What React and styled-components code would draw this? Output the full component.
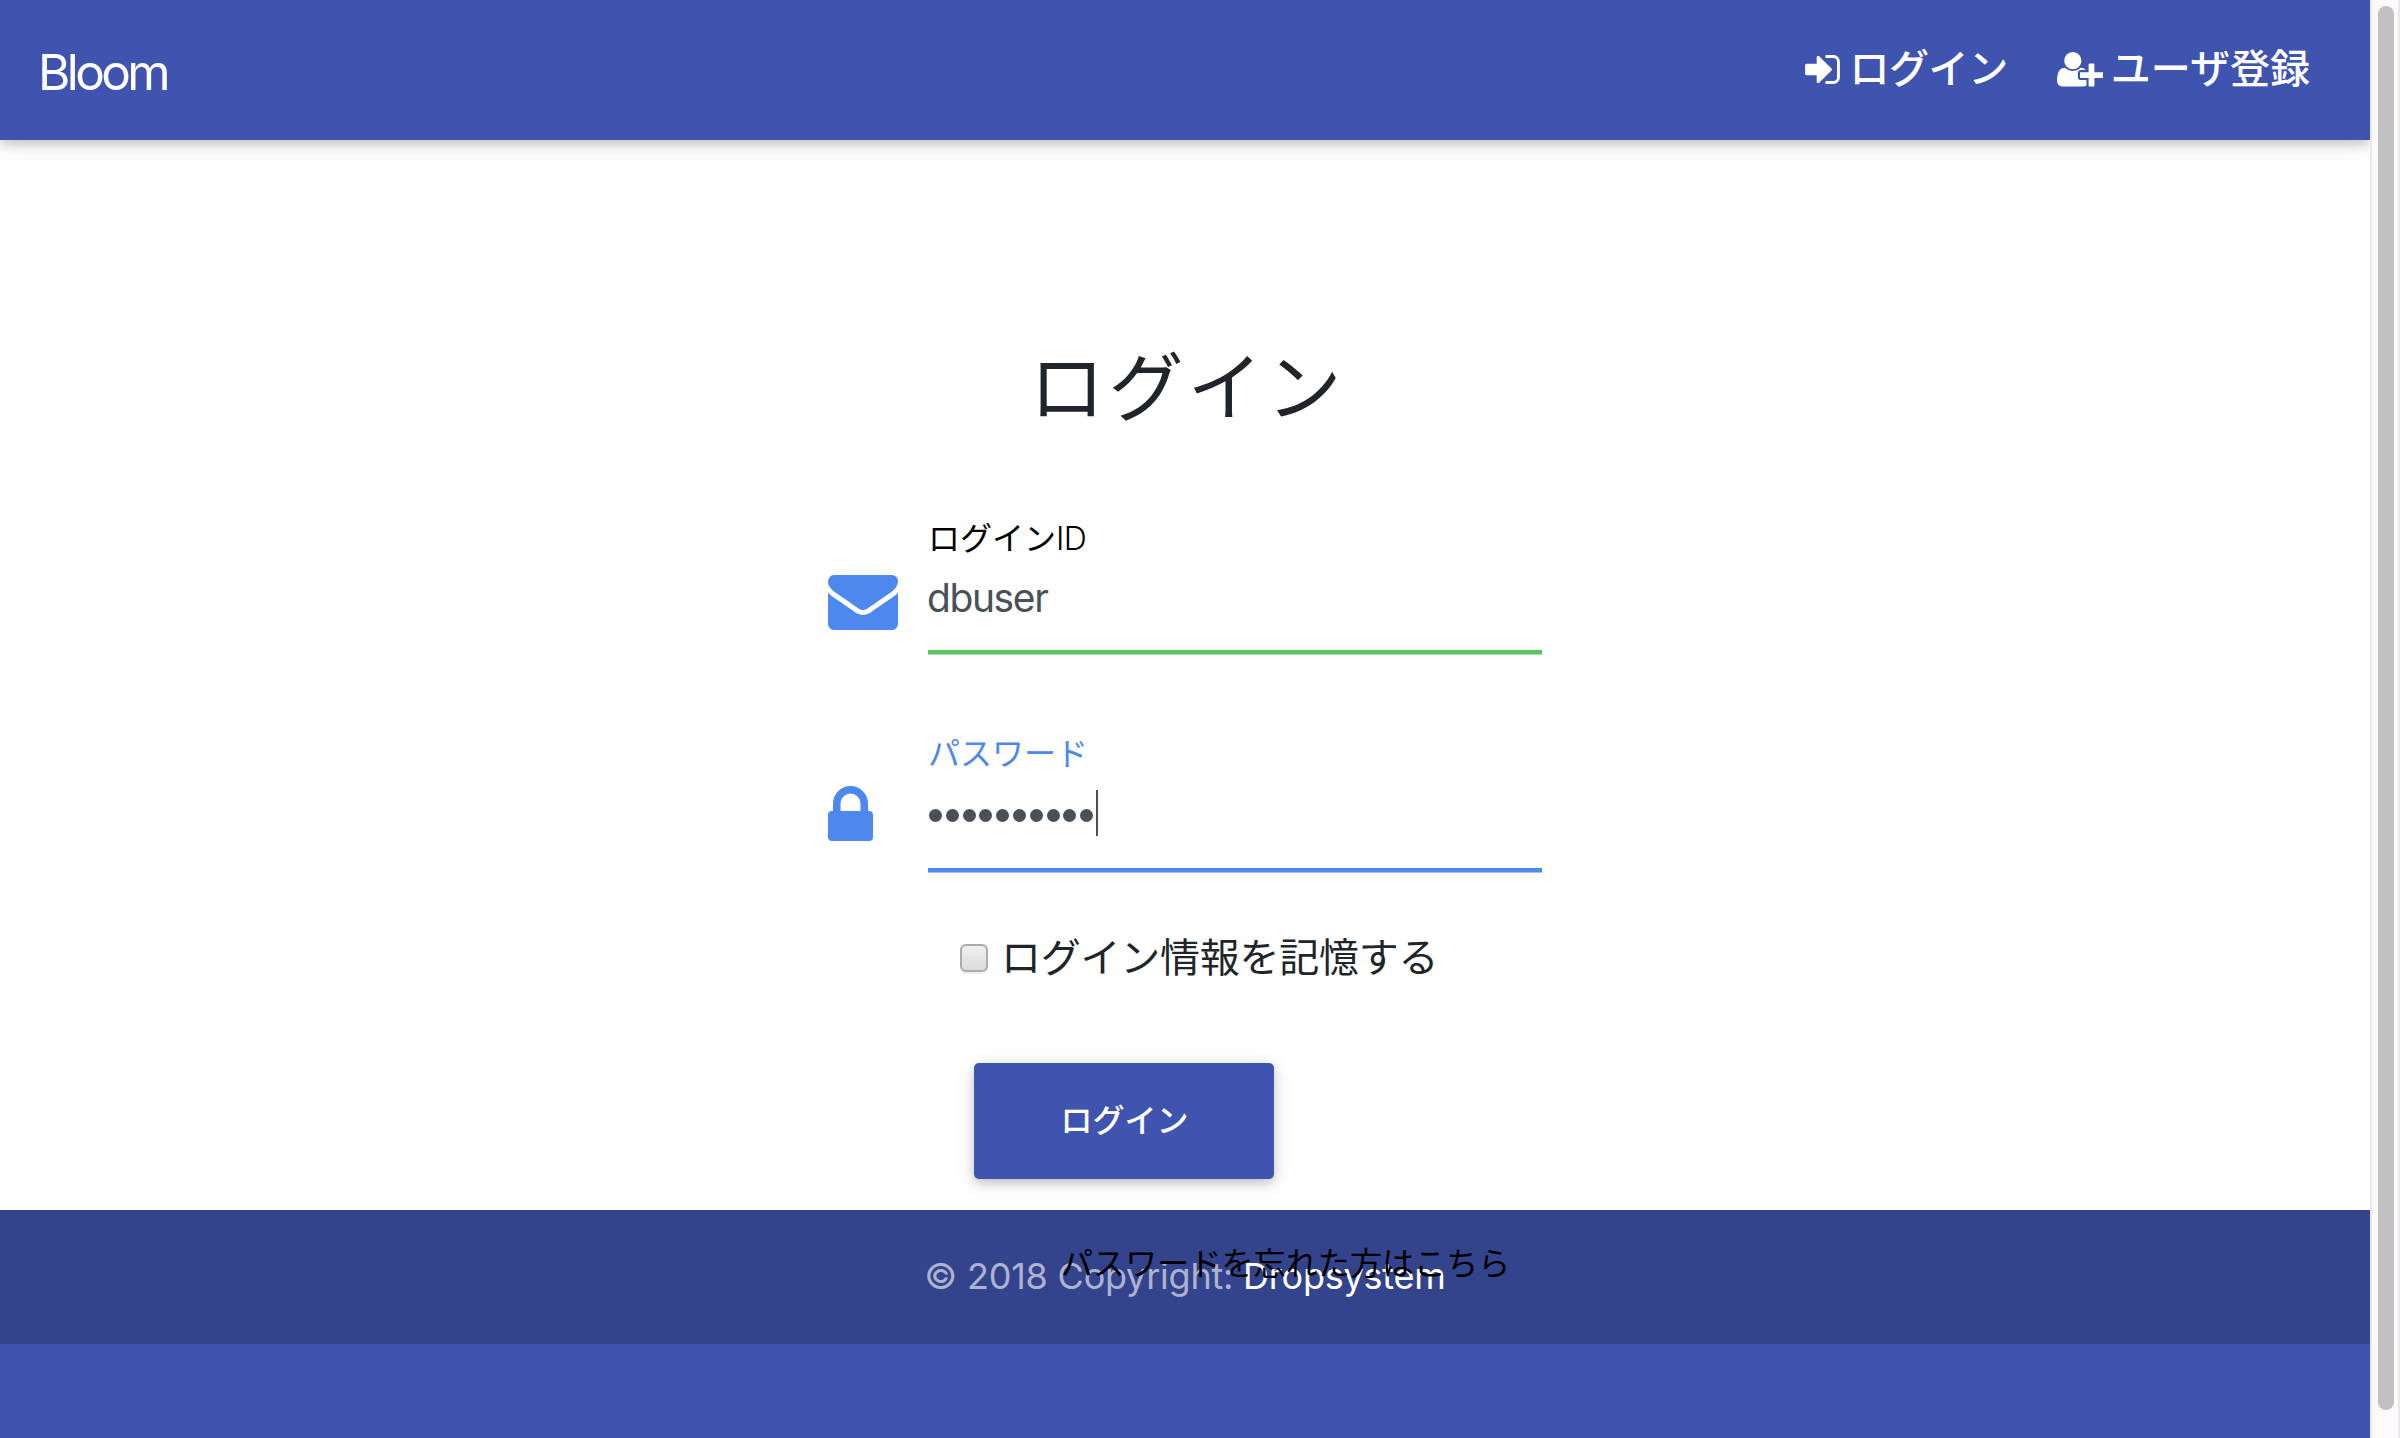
import React from "react";
import styled, { createGlobalStyle } from "styled-components";

const INDIGO = "#3f54af";
const BLUE = "#4d88ee";
const GREEN = "#5bc563";

const Global = createGlobalStyle`
  * { box-sizing: border-box; }
  html, body { margin: 0; background: #fff; overflow: hidden; }
  body {
    font-family: Inter, "Noto Sans CJK JP", sans-serif;
    font-size: 40px;
    line-height: 60px;
    color: #212529;
  }
`;

const Window = styled.div`
  display: flex;
  width: 2400px;
  height: 1438px;
`;

const Page = styled.div`
  width: 2370px;
  height: 1438px;
  display: flex;
  flex-direction: column;
`;

const Navbar = styled.header`
  display: flex;
  justify-content: space-between;
  height: 140px;
  flex: none;
  padding: 0 60px 0 38px;
  background: ${INDIGO};
  color: #fff;
  box-shadow: 0 4px 10px 0 rgba(0, 0, 0, 0.16), 0 4px 20px 0 rgba(0, 0, 0, 0.12);
`;

const Brand = styled.a`
  margin-top: 42px;
  font-size: 49.5px;
  font-weight: 400;
  letter-spacing: -3.6px;
`;

const NavLinks = styled.nav`
  display: flex;
  gap: 49px;
  padding-top: 39px;
`;

const NavLink = styled.a`
  display: flex;
  white-space: nowrap;
  font-weight: 500;
  letter-spacing: ${(p) => p.$spacing || 0}px;
`;

const NavIcon = styled.svg`
  flex: none;
  width: ${(p) => p.$w}px;
  height: ${(p) => p.$h}px;
  margin: ${(p) => p.$top}px ${(p) => p.$right}px 0 0;
  fill: currentColor;
`;

const Main = styled.main`
  height: 1070px;
  flex: none;
  display: flex;
  flex-direction: column;
  align-items: center;
`;

const Title = styled.h1`
  margin: 200px 0 0;
  padding-left: 5px;
  font-size: 75px;
  letter-spacing: 4px;
  line-height: 96px;
  font-weight: 400;
`;

const Form = styled.form`
  width: 716px;
  margin: 77px 0 0 0;
  display: flex;
  flex-direction: column;
`;

const Field = styled.div`
  display: flex;
  height: ${(p) => p.$h}px;
  color: ${(p) => p.$color};
`;

const FieldIcon = styled.svg`
  width: 70px;
  height: 70px;
  flex: none;
  margin: ${(p) => p.$top}px 30px 0 1px;
  fill: ${BLUE};
`;

const Control = styled.div`
  width: 614px;
  flex: none;
  height: ${(p) => p.$h}px;
  padding-top: ${(p) => p.$top}px;
  border-bottom: 4px solid ${(p) => p.$line};
  box-shadow: 0 1px 0 0 ${(p) => p.$line}88;
`;

const Label = styled.label`
  display: block;
  height: 48px;
  line-height: 48px;
  font-size: 32px;
  font-weight: 400;
`;

const Latin = styled.span`
  font-weight: 300;
  letter-spacing: -0.6px;
`;

const Value = styled.div`
  display: flex;
  align-items: center;
  height: 60px;
  margin-top: 5px;
  margin-left: -1px;
  font-size: 39px;
  letter-spacing: -1.4px;
  color: #495057;
`;

const Dots = styled.div`
  display: flex;
  gap: 3.8px;
  padding: 4px 3px 0 2px;
`;

const Dot = styled.i`
  width: 13px;
  height: 13px;
  border-radius: 50%;
  background: #495057;
`;

const Caret = styled.i`
  width: 2px;
  height: 46px;
  background: #495057;
`;

const Remember = styled.label`
  display: flex;
  align-items: center;
  height: 60px;
  margin: 56px 0 0 133px;
  letter-spacing: -0.25px;
`;

const Checkbox = styled.span`
  width: 28px;
  height: 28px;
  margin-right: 13px;
  border: 2px solid #aaa;
  border-radius: 6px;
  background: linear-gradient(#efefef, #dcdcdc);
  box-shadow: 0 2px 0 #ededed;
`;

const Submit = styled.button`
  width: 300px;
  height: 116px;
  margin: 75px 0 0 147px;
  padding: 0 0 1px 1px;
  border: 0;
  border-radius: 5px;
  background: ${INDIGO};
  color: #fff;
  font: 500 32px/48px Inter, "Noto Sans CJK JP", sans-serif;
  box-shadow: 0 4px 10px 0 rgba(0, 0, 0, 0.16), 0 4px 20px 0 rgba(0, 0, 0, 0.12);
`;

const Footer = styled.footer`
  flex: 1;
  background: ${INDIGO};
`;

const Copyright = styled.div`
  position: relative;
  height: 134px;
  padding-top: 36px;
  text-align: center;
  background: #33438c;
  color: rgba(255, 255, 255, 0.6);
  font-size: 36px;
  white-space: nowrap;
  letter-spacing: -0.22px;
`;

const Company = styled.a`
  color: #fff;
`;

const Forgot = styled.a`
  position: absolute;
  left: 1061px;
  top: 30px;
  color: #000;
  font-size: 32px;
  line-height: 48px;
  font-weight: 400;
  letter-spacing: 0.1px;
`;

const Scrollbar = styled.aside`
  width: 30px;
  height: 1438px;
  padding: 6px 4px 0 6px;
  border: solid #e8e8e8;
  border-width: 0 2px;
  background: #fafafa;
`;

const Thumb = styled.div`
  width: 16px;
  height: 1404px;
  border-radius: 8px;
  background: #c1c1c1;
`;

export default function App() {
  return (
    <Window>
      <Global />
      <Page>
        <Navbar>
          <Brand>Bloom</Brand>
          <NavLinks>
            <NavLink $spacing={-0.4}>
              <NavIcon viewBox="128 256 1536 1280" $w={35} $h={29} $top={16} $right={9}>
                <path d="M1312 896q0 26-19 45l-544 544q-19 19-45 19t-45-19-19-45v-288h-448q-26 0-45-19t-19-45v-384q0-26 19-45t45-19h448v-288q0-26 19-45t45-19 45 19l544 544q19 19 19 45zm352-352v704q0 119-84.5 203.5t-203.5 84.5h-320q-13 0-22.5-9.5t-9.5-22.5q0-4-1-20t-.5-26.5 3-23.5 10-19.5 20.5-6.5h320q66 0 113-47t47-113v-704q0-66-47-113t-113-47h-312l-11.5-1-11.5-3-8-5.5-7-9-2-13.5q0-4-1-20t-.5-26.5 3-23.5 10-19.5 20.5-6.5h320q119 0 203.5 84.5t84.5 203.5z" />
              </NavIcon>
              ログイン
            </NavLink>
            <NavLink>
              <NavIcon viewBox="0 128 2048 1536" $w={46} $h={34.5} $top={13} $right={8}>
                <path d="M704 896q-159 0-271.5-112.5t-112.5-271.5 112.5-271.5 271.5-112.5 271.5 112.5 112.5 271.5-112.5 271.5-271.5 112.5zm960 128h352q13 0 22.5 9.5t9.5 22.5v192q0 13-9.5 22.5t-22.5 9.5h-352v352q0 13-9.5 22.5t-22.5 9.5h-192q-13 0-22.5-9.5t-9.5-22.5v-352h-352q-13 0-22.5-9.5t-9.5-22.5v-192q0-13 9.5-22.5t22.5-9.5h352v-352q0-13 9.5-22.5t22.5-9.5h192q13 0 22.5 9.5t9.5 22.5v352zm-736 224q0 52 38 90t90 38h256v238q-68 50-171 50h-874q-121 0-194-69t-73-190q0-53 3.5-103.5t14-109 26.5-108.5 43-97.5 62-81 85.5-53.5 111.5-20q19 0 39 17 79 61 154.5 91.5t164.5 30.5 164.5-30.5 154.5-91.5q20-17 39-17 132 0 217 96h-223q-52 0-90 38t-38 90v192z" />
              </NavIcon>
              ユーザ登録
            </NavLink>
          </NavLinks>
        </Navbar>
        <Main>
          <Title>ログイン</Title>
          <Form>
            <Field $h={211} $color="#000">
              <FieldIcon viewBox="0 0 1792 1792" $top={52}>
                <path d="M1792 710v794q0 66-47 113t-113 47h-1472q-66 0-113-47t-47-113v-794q44 49 101 87 362 246 497 345 57 42 92.5 65.5t94.5 48 110 24.5h2q51 0 110-24.5t94.5-48 92.5-65.5q170-123 498-345 57-39 100-87zm0-294q0 79-49 151t-122 123q-376 261-468 325-10 7-42.5 31t-54 38.5-52 32.5-57.5 27-50 9h-2q-23 0-50-9t-57.5-27-52-32.5-54-38.5-42.5-31q-91-64-262-182.5t-205-142.5q-62-42-117-115.5t-55-136.5q0-78 41.5-130t118.5-52h1472q65 0 112.5 47t47.5 113z" />
              </FieldIcon>
              <Control $h={141} $top={2} $line={GREEN}>
                <Label>
                  ログイン<Latin>ID</Latin>
                </Label>
                <Value>dbuser</Value>
              </Control>
            </Field>
            <Field $h={148} $color={BLUE}>
              <FieldIcon viewBox="320 0 1792 1792" $top={57}>
                <path d="M640 768h512v-192q0-106-75-181t-181-75-181 75-75 181v192zm832 96v576q0 40-28 68t-68 28h-960q-40 0-68-28t-28-68v-576q0-40 28-68t68-28h32v-192q0-184 132-316t316-132 316 132 132 316v192h32q40 0 68 28t28 68z" />
              </FieldIcon>
              <Control $h={148} $top={6} $line={BLUE}>
                <Label>パスワード</Label>
                <Value>
                  <Dots>
                    {Array.from({ length: 10 }, (_, i) => (
                      <Dot key={i} />
                    ))}
                  </Dots>
                  <Caret />
                </Value>
              </Control>
            </Field>
            <Remember>
              <Checkbox />
              ログイン情報を記憶する
            </Remember>
            <Submit type="button">ログイン</Submit>
          </Form>
        </Main>
        <Footer>
          <Copyright>
            © 2018 Copyright: <Company>Dropsystem</Company>
            <Forgot>パスワードを忘れた方はこちら</Forgot>
          </Copyright>
        </Footer>
      </Page>
      <Scrollbar>
        <Thumb />
      </Scrollbar>
    </Window>
  );
}
